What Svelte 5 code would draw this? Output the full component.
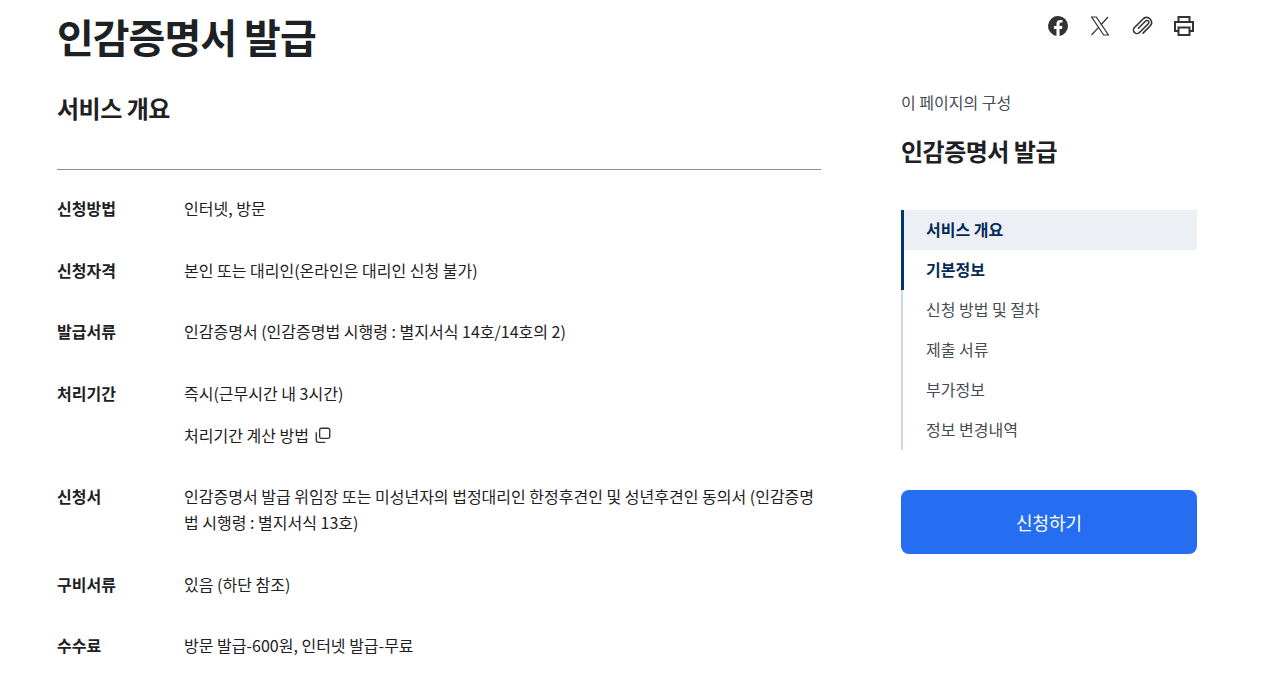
<script>
  const rows = [
    { label: "신청방법", lines: ["인터넷, 방문"] },
    { label: "신청자격", lines: ["본인 또는 대리인(온라인은 대리인 신청 불가)"] },
    { label: "발급서류", lines: ["인감증명서 (인감증명법 시행령 : 별지서식 14호/14호의 2)"] },
    { label: "처리기간", lines: ["즉시(근무시간 내 3시간)"], link: "처리기간 계산 방법" },
    { label: "신청서", lines: ["인감증명서 발급 위임장 또는 미성년자의 법정대리인 한정후견인 및 성년후견인 동의서 (인감증명법 시행령 : 별지서식 13호)"] },
    { label: "구비서류", lines: ["있음 (하단 참조)"] },
    { label: "수수료", lines: ["방문 발급-600원, 인터넷 발급-무료"] },
  ]

  const toc = [
    { text: "서비스 개요", on: true, current: true },
    { text: "기본정보", on: true },
    { text: "신청 방법 및 절차" },
    { text: "제출 서류" },
    { text: "부가정보" },
    { text: "정보 변경내역" },
  ]
</script>

<div class="page">
  <header class="top">
    <h1>인감증명서 발급</h1>
    <div class="tools">
      <svg viewBox="0 0 24 24" class="icon"><path fill="#333" d="M22 12a10 10 0 1 0-11.56 9.88v-6.99H7.9V12h2.54V9.8c0-2.5 1.49-3.89 3.78-3.89 1.09 0 2.24.2 2.24.2v2.46h-1.26c-1.24 0-1.63.77-1.63 1.56V12h2.78l-.44 2.89h-2.34v6.99A10 10 0 0 0 22 12z"/></svg>
      <svg viewBox="0 0 24 24" class="icon"><path fill="none" stroke="#333" stroke-width="1.2" d="M3.6 3h4.7l12.1 18h-4.7zM20 3l-7.2 8M10.8 13.2L3.5 21"/></svg>
      <svg viewBox="0 0 24 24" class="icon"><path fill="none" stroke="#333" stroke-width="1.6" stroke-linecap="round" d="M8.4 14.2l7.2-7.2a1.9 1.9 0 0 1 2.7 2.7l-8.8 8.8a3.5 3.5 0 0 1-5-5l9-9a5 5 0 0 1 7 7l-7.4 7.6"/></svg>
      <svg viewBox="0 0 24 24" class="icon"><path fill="none" stroke="#333" stroke-width="2" d="M6.5 8V3h11v5M6.5 17H3V8h18v9h-3.500M6.500 13.500h11V21h-11z"/></svg>
    </div>
  </header>

  <div class="columns">
    <main>
      <h2>서비스 개요</h2>
      <dl>
        {#each rows as row}
          <div class="row">
            <dt>{row.label}</dt>
            <dd>
              {#each row.lines as line}
                <p>{line}</p>
              {/each}
              {#if row.link}
                <p class="link">
                  {row.link}
                  <svg viewBox="0 0 16 16" class="copy"><path fill="none" stroke="#333" stroke-width="1.2" d="M5 3.500a1.500 1.500 0 0 1 1.500-1.500h6a1.500 1.500 0 0 1 1.500 1.500v6a1.500 1.500 0 0 1-1.500 1.500h-6a1.500 1.500 0 0 1-1.500-1.500zM2 5.500v7a2 2 0 0 0 2 2h6"/></svg>
                </p>
              {/if}
            </dd>
          </div>
        {/each}
      </dl>
    </main>

    <aside>
      <div class="eyebrow">이 페이지의 구성</div>
      <div class="aside-title">인감증명서 발급</div>
      <ul>
        {#each toc as item}
          <li class:on={item.on} class:current={item.current}>{item.text}</li>
        {/each}
      </ul>
      <button>신청하기</button>
    </aside>
  </div>
</div>

<style>
  :global(body) {
    background: #fff;
    overflow: hidden;
  }

  .page {
    height: 675px;
    overflow: hidden;
    padding: 0 75px 0 57px;
    font-family: "Noto Sans CJK KR", "Noto Sans", sans-serif;
    font-size: 16px;
    line-height: 26px;
    color: #1e2124;
  }

  .top {
    display: flex;
    justify-content: space-between;
    align-items: flex-start;
    height: 94px;
    padding-top: 8px;
    box-sizing: border-box;
  }

  h1 {
    margin: 0;
    font-size: 40px;
    line-height: 56px;
    font-weight: 700;
    letter-spacing: -1px;
  }

  .tools {
    display: flex;
    gap: 18px;
    margin-top: 6px;
    margin-right: 1px;
  }

  .icon {
    width: 24px;
    height: 24px;
  }

  .columns {
    display: flex;
    justify-content: space-between;
  }

  main {
    width: 764px;
  }

  h2 {
    margin: 0;
    height: 75px;
    border-bottom: 1px solid #8c8c8c;
    font-size: 24px;
    line-height: 28px;
    font-weight: 700;
    letter-spacing: -0.5px;
  }

  dl {
    margin: 25px 0 0;
    display: flex;
    flex-direction: column;
    gap: 35.500px;
  }

  .row {
    display: flex;
  }

  dt {
    flex: 0 0 127px;
    font-weight: 700;
  }

  dd {
    margin: 0;
    flex: 1;
  }

  p {
    margin: 0;
  }

  .link {
    margin-top: 16px;
    display: flex;
    align-items: center;
    gap: 5px;
  }

  .copy {
    width: 18px;
    height: 18px;
  }

  aside {
    width: 296px;
  }

  .eyebrow {
    color: #464c53;
    line-height: 24px;
    margin-top: -4px;
  }

  .aside-title {
    margin-top: 20px;
    font-size: 24px;
    line-height: 34px;
    font-weight: 700;
    letter-spacing: -0.5px;
  }

  ul {
    list-style: none;
    margin: 42px 0 0;
    padding: 0;
  }

  li {
    height: 40px;
    line-height: 38px;
    padding-left: 23px;
    border-left: 2px solid #cdd6e3;
    color: #464c53;
  }

  li.on {
    padding-left: 22px;
    border-left: 3px solid #003675;
    color: #052b57;
    font-weight: 700;
  }

  li.current {
    background: #eceff4;
  }

  button {
    display: block;
    width: 100%;
    height: 64px;
    margin-top: 40px;
    border: 0;
    border-radius: 8px;
    background: #256ef1;
    color: #fff;
    font: inherit;
    font-size: 18px;
  }
</style>
